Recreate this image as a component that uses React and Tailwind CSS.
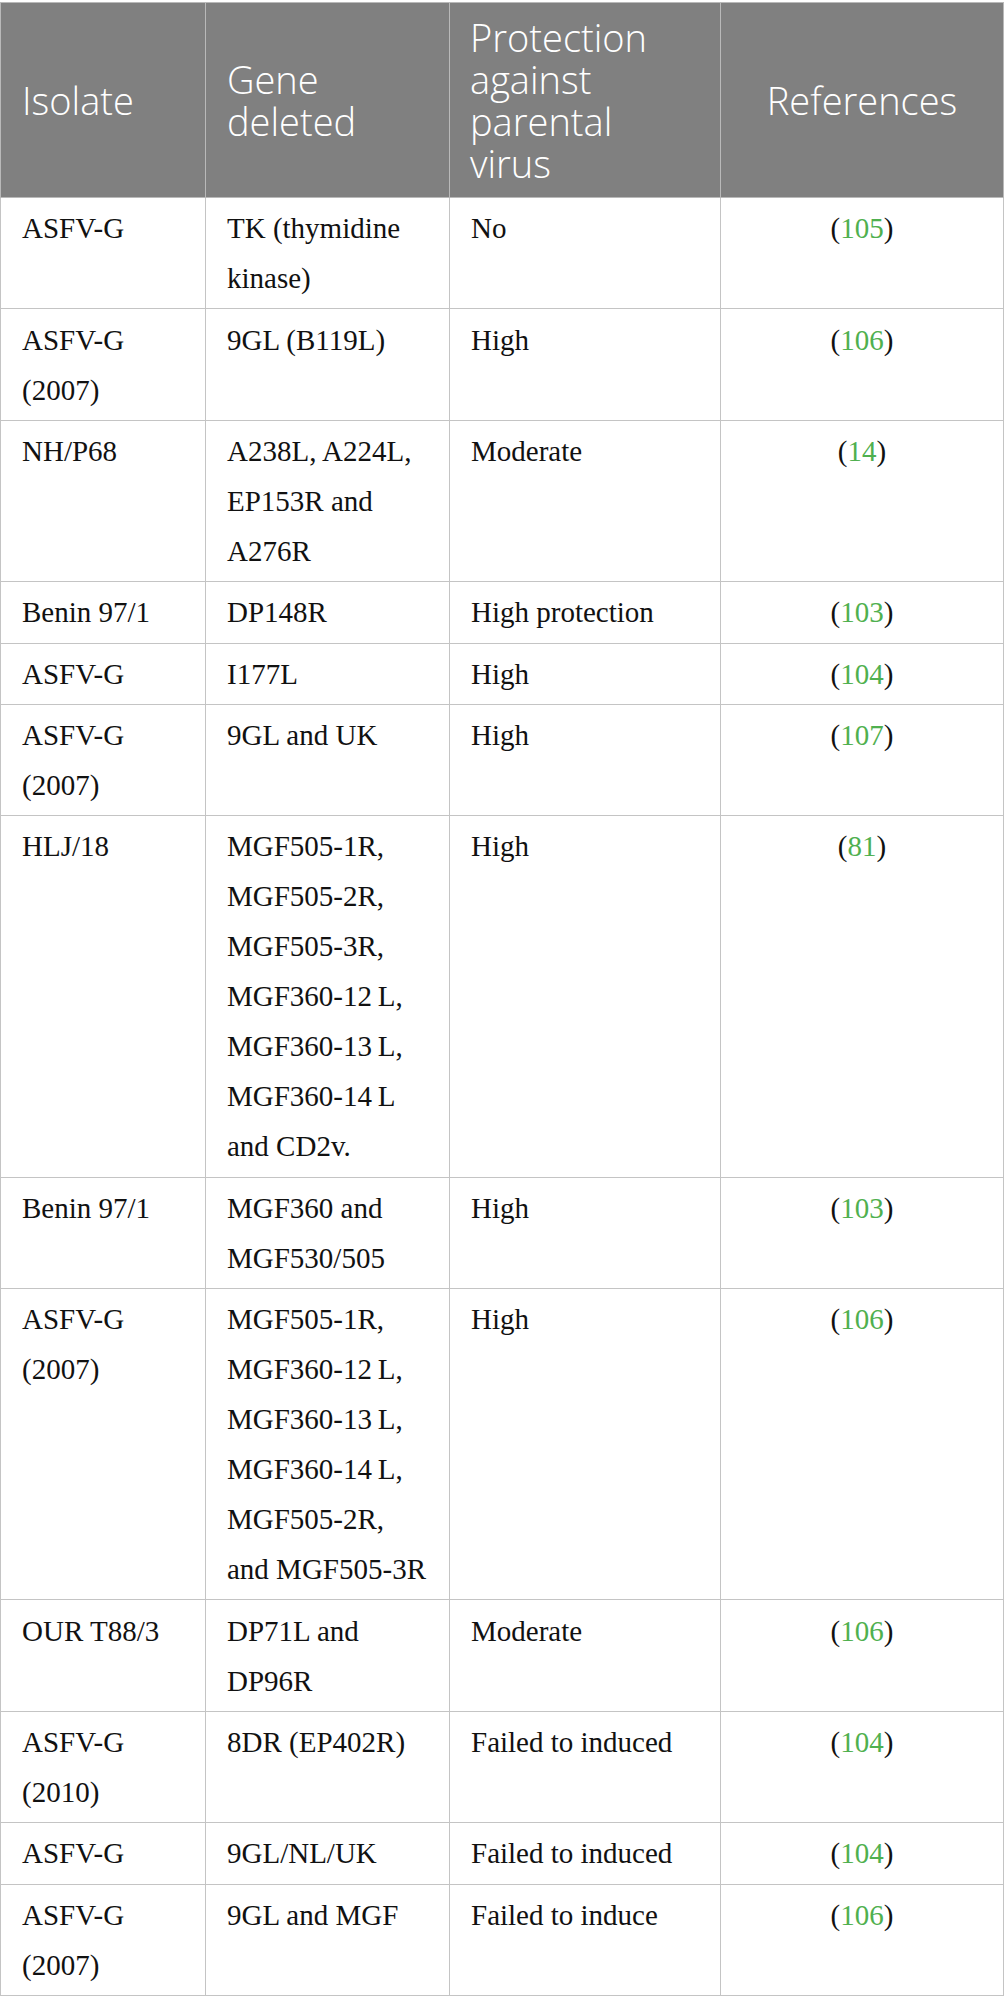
import React from 'react';

const rows = [
  { isolate: 'ASFV-G', gene: 'TK (thymidine kinase)', protection: 'No', ref: '105' },
  { isolate: 'ASFV-G (2007)', gene: '9GL (B119L)', protection: 'High', ref: '106' },
  { isolate: 'NH/P68', gene: 'A238L, A224L, EP153R and A276R', protection: 'Moderate', ref: '14' },
  { isolate: 'Benin 97/1', gene: 'DP148R', protection: 'High protection', ref: '103' },
  { isolate: 'ASFV-G', gene: 'I177L', protection: 'High', ref: '104' },
  { isolate: 'ASFV-G (2007)', gene: '9GL and UK', protection: 'High', ref: '107' },
  {
    isolate: 'HLJ/18',
    gene: 'MGF505-1R, MGF505-2R, MGF505-3R, MGF360-12\u2009L, MGF360-13\u2009L, MGF360-14\u2009L and CD2v.',
    protection: 'High',
    ref: '81',
  },
  { isolate: 'Benin 97/1', gene: 'MGF360 and MGF530/505', protection: 'High', ref: '103' },
  {
    isolate: 'ASFV-G (2007)',
    gene: 'MGF505-1R, MGF360-12\u2009L, MGF360-13\u2009L, MGF360-14\u2009L, MGF505-2R, and MGF505-3R',
    protection: 'High',
    ref: '106',
  },
  { isolate: 'OUR T88/3', gene: 'DP71L and DP96R', protection: 'Moderate', ref: '106' },
  { isolate: 'ASFV-G (2010)', gene: '8DR (EP402R)', protection: 'Failed to induced', ref: '104' },
  { isolate: 'ASFV-G', gene: '9GL/NL/UK', protection: 'Failed to induced', ref: '104' },
  { isolate: 'ASFV-G (2007)', gene: '9GL and MGF', protection: 'Failed to induce', ref: '106' },
];

const th = 'border border-[#b9b9b9] bg-[#808080] py-[13px] align-middle font-light text-[38px] leading-[42px] text-white';
const td = 'border border-[#c4c4c4] px-[21px] py-[5.2px] align-top text-[29px] leading-[50px] text-[#111]';

export default function App() {
  return (
    <div className="min-h-screen bg-white pt-[2px]">
      <table className="w-[1004px] table-fixed border-collapse">
        <colgroup>
          <col className="w-[205px]" />
          <col className="w-[244px]" />
          <col className="w-[271px]" />
          <col />
        </colgroup>
        <thead style={{ fontFamily: '"Open Sans", "Noto Sans", sans-serif' }}>
          <tr>
            <th className={`${th} pl-[21px] pr-[12px] text-left`}>Isolate</th>
            <th className={`${th} pl-[21px] pr-[12px] text-left`}>Gene deleted</th>
            <th className={`${th} pl-[20px] pr-[30px] text-left`}>Protection against parental virus</th>
            <th className={`${th} px-[10px] text-center`}>References</th>
          </tr>
        </thead>
        <tbody style={{ fontFamily: '"Liberation Serif", "DejaVu Serif", serif' }}>
          {rows.map((r, i) => (
            <tr key={i}>
              <td className={td}>{r.isolate}</td>
              <td className={td}>{r.gene}</td>
              <td className={td}>{r.protection}</td>
              <td className={`${td} text-center`}>
                (<span className="text-[#4fb04f]">{r.ref}</span>)
              </td>
            </tr>
          ))}
        </tbody>
      </table>
    </div>
  );
}
